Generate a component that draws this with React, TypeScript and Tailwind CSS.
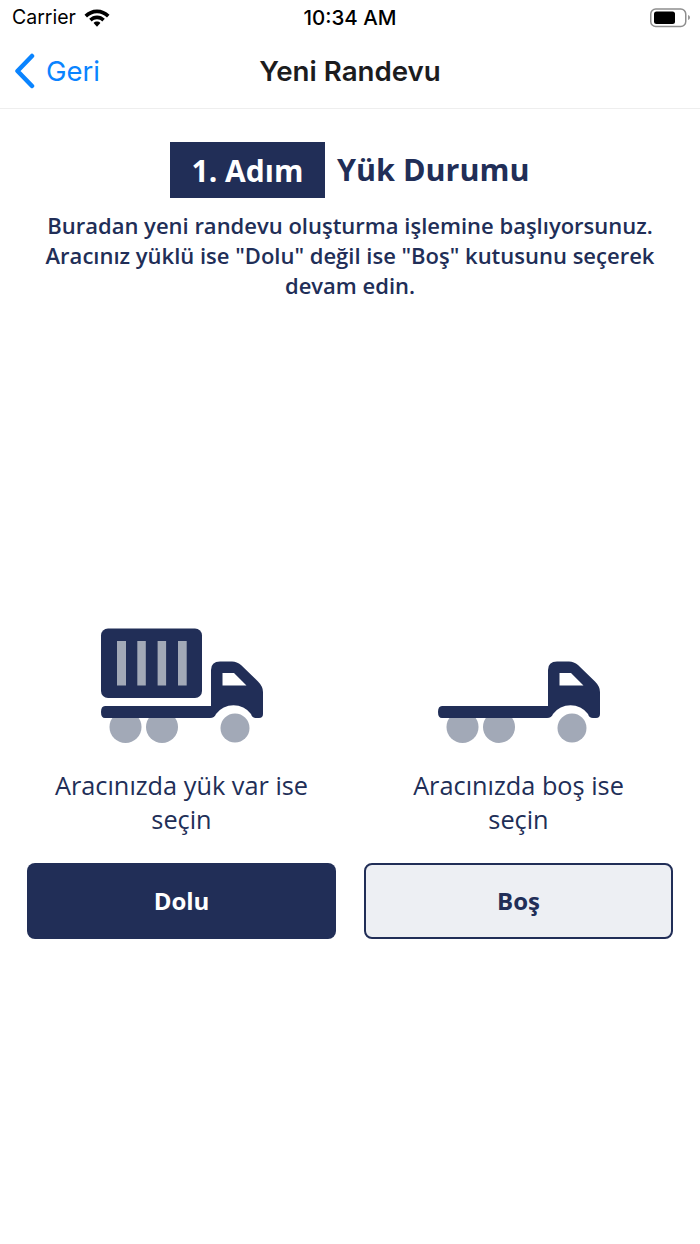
import React from 'react';

const navy = '#212e57';

const Truck: React.FC<{ loaded?: boolean }> = ({ loaded }) => (
  <svg width="164" height="116" viewBox="10 8 164 116" className="block">
    {loaded && (
      <>
        <rect x="11" y="8.5" width="101" height="69.5" rx="7" fill="#212e57" />
        <rect x="27" y="21" width="9" height="44.5" fill="#a2a9b7" />
        <rect x="47.3" y="21" width="8.5" height="44.5" fill="#a2a9b7" />
        <rect x="67.6" y="21" width="8.5" height="44.5" fill="#a2a9b7" />
        <rect x="88" y="21" width="8.7" height="44.5" fill="#a2a9b7" />
      </>
    )}
    <circle cx="35.5" cy="107" r="16" fill="#a2a9b7" />
    <circle cx="72" cy="107" r="16" fill="#a2a9b7" />
    <circle cx="145" cy="108" r="14.5" fill="#a2a9b7" />
    <path
      fillRule="evenodd"
      fill="#212e57"
      d="M15 86 H121 V50 Q121 41.5 130 41.5 H142 Q147 41.5 151 45 L168 61.5 Q173 66.5 173 72 V94 Q173 98 169 98 H166 Q162 98 161 94 A22 22 0 0 0 126 94 Q124.500 98 120 98 H15 Q11 98 11 92 Q11 86 15 86 Z M132.500 53 V65.500 H156.500 L144 53 Z"
    />
  </svg>
);

const StatusBar: React.FC = () => (
  <div className="flex h-[36px] items-center justify-between font-['Inter',sans-serif] text-black">
    <div className="flex w-[200px] items-center gap-[8px] pl-[12px]">
      <span className="text-[19.5px] leading-none">Carrier</span>
      <svg width="26" height="19" viewBox="0 0 26 19" fill="black">
        <path d="M13 0.500C8 0.500 4 2.500 0.500 5.800L3 8.500C5.700 5.900 9 4.300 13 4.300C17 4.300 20.300 5.900 23 8.500L25.500 5.800C22 2.500 18 0.500 13 0.500Z" />
        <path d="M13 6.500C10 6.500 7.400 7.700 5.200 9.800L7.700 12.400C9.200 11 11 10.200 13 10.200C15 10.200 16.800 11 18.300 12.400L20.800 9.800C18.600 7.700 16 6.500 13 6.500Z" />
        <path d="M13 12.500C11.700 12.500 10.500 13 9.600 13.900L13 17.800L16.400 13.900C15.500 13 14.300 12.500 13 12.500Z" />
      </svg>
    </div>
    <span className="text-[20.5px] font-medium leading-none">10:34 AM</span>
    <div className="flex w-[200px] items-center justify-end pr-[8px]">
      <svg width="42" height="20" viewBox="0 0 42 20">
        <rect x="0.750" y="1" width="35" height="17.500" rx="5" fill="none" stroke="#8e8e8e" strokeWidth="1.500" />
        <rect x="4" y="3.500" width="21" height="12.500" rx="2.500" fill="black" />
        <path d="M38 7 C39.500 7.500 40 8.500 40 9.500 C40 10.500 39.500 11.500 38 12 Z" fill="#9a9a9a" />
      </svg>
    </div>
  </div>
);

const NavBar: React.FC = () => (
  <div className="relative flex h-[73px] items-center justify-center border-b border-[#eeeeee] font-['Inter',sans-serif]">
    <div className="absolute left-[14px] top-[17px] flex items-center gap-[11px] text-[#0a84ff]">
      <svg width="21" height="36" viewBox="0 0 21 36" fill="none">
        <path d="M18 3 L3.500 18 L18 33" stroke="#0a84ff" strokeWidth="4.500" strokeLinecap="round" strokeLinejoin="round" />
      </svg>
      <span className="pt-[2px] text-[27.5px] leading-none">Geri</span>
    </div>
    <span className="text-[27.7px] font-semibold leading-none text-[#1c1c1e]">Yeni Randevu</span>
  </div>
);

const Choice: React.FC<{ label: string; button: string; loaded?: boolean; filled?: boolean }> = ({
  label,
  button,
  loaded,
  filled,
}) => (
  <div className="flex w-[309px] flex-col items-center">
    <Truck loaded={loaded} />
    <p className="mt-[24px] h-[68px] w-[265px] text-center text-[25.3px] leading-[34px] text-[#212e57]">{label}</p>
    <button
      className={
        filled
          ? 'mt-[27px] h-[76px] w-full rounded-[8px] bg-[#212e57] text-[24px] font-bold text-white'
          : 'mt-[27px] h-[76px] w-full rounded-[8px] border-2 border-[#212e57] bg-[#edeff3] text-[24px] font-bold text-[#212e57]'
      }
    >
      {button}
    </button>
  </div>
);

const App: React.FC = () => {
  return (
    <div className="flex h-[1244px] w-[700px] flex-col overflow-hidden bg-white">
      <StatusBar />
      <NavBar />
      <div className="flex flex-col items-center font-['Open_Sans',sans-serif]" style={{ color: navy }}>
        <div className="mt-[33px] flex w-[360px] items-center gap-[12px] whitespace-nowrap">
          <div className="flex h-[56px] w-[155px] shrink-0 items-center justify-center bg-[#212e57] text-[30px] font-bold text-white">
            1. Adım
          </div>
          <span className="text-[30.5px] font-bold">Yük Durumu</span>
        </div>
        <p className="mt-[12px] w-[640px] text-center text-[22px] font-semibold leading-[30px]">
          Buradan yeni randevu oluşturma işlemine başlıyorsunuz. Aracınız yüklü ise "Dolu" değil ise "Boş" kutusunu seçerek devam edin.
        </p>
        <div className="mt-[328px] flex gap-[28px]">
          <Choice label="Aracınızda yük var ise seçin" button="Dolu" loaded filled />
          <Choice label="Aracınızda boş ise seçin" button="Boş" />
        </div>
      </div>
    </div>
  );
};

export default App;
